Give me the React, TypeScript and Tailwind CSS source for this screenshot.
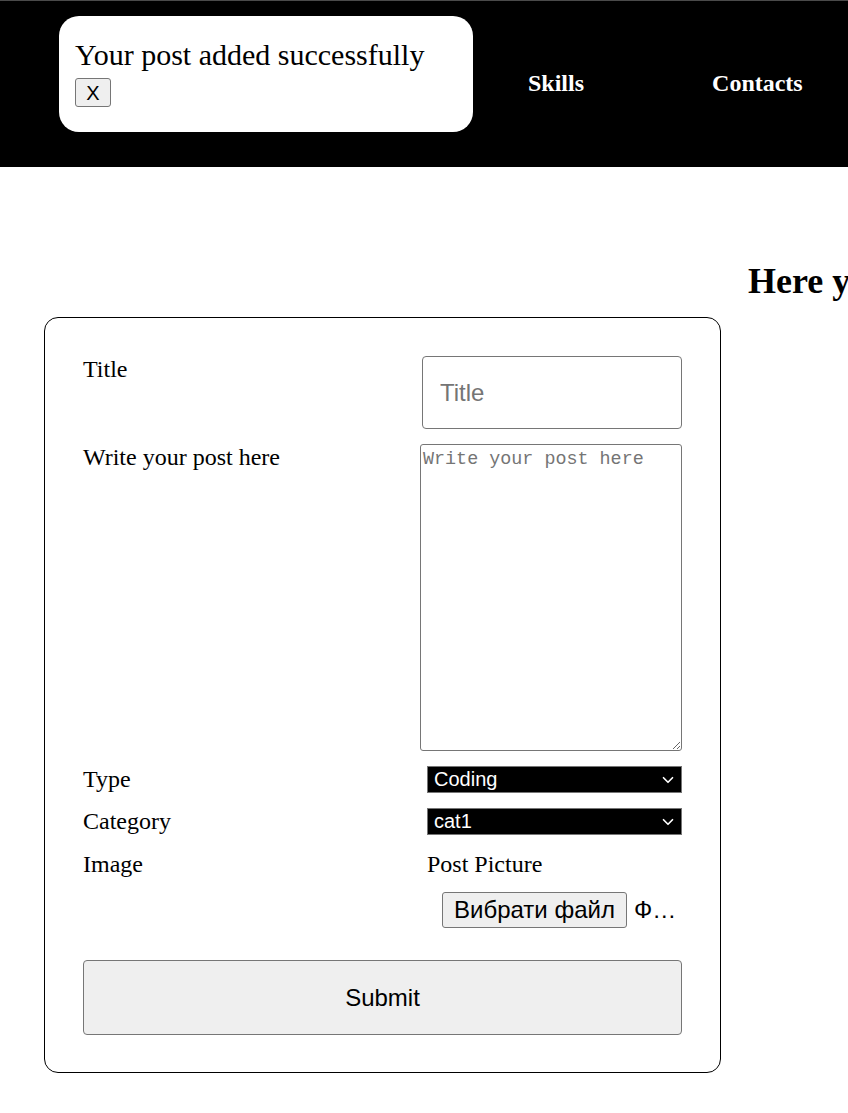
import { ChevronDown } from 'lucide-react';

const serif = { fontFamily: '"Liberation Serif", "Times New Roman", serif' };
const sans = { fontFamily: '"Liberation Sans", Arial, sans-serif' };

const Field = ({ label, children, center = false }: { label: string; children: React.ReactNode; center?: boolean }) => (
  <div className={`flex justify-between ${center ? 'items-center' : 'items-start'}`}>
    <label className="text-[24px] leading-[27px]">{label}</label>
    {children}
  </div>
);

const Select = ({ value }: { value: string }) => (
  <div className="relative w-[255px] h-[27px] bg-black border border-[#767676] text-white">
    <span className="block pl-[6px] text-[20px] leading-[25px]" style={sans}>
      {value}
    </span>
    <ChevronDown className="absolute right-[4px] top-[4px] h-[18px] w-[18px]" strokeWidth={2.25} />
  </div>
);

export default function App() {
  return (
    <div className="min-h-[1113px] bg-white text-black overflow-hidden" style={serif}>
      <header className="h-[167px] bg-black border-t border-[#4a4a4a] flex items-start">
        <div className="ml-[59px] mt-[15px] w-[414px] h-[116px] rounded-[20px] bg-white pl-[16px] pt-[22px]">
          <p className="text-[30px] leading-[34px]">Your post added successfully</p>
          <button
            className="mt-[6px] w-[36px] h-[29px] bg-[#efefef] border border-[#767676] rounded-[3px] text-[20px] leading-none"
            style={sans}
          >
            X
          </button>
        </div>
        <nav className="flex items-center h-full text-white font-bold text-[24px] pb-[2px]">
          <a className="ml-[55px]">Skills</a>
          <a className="ml-[128px]">Contacts</a>
        </nav>
      </header>

      <main className="flex items-start">
        <form className="shrink-0 ml-[44px] mt-[150px] w-[677px] border border-black rounded-[14px] px-[38px] pt-[38px] pb-[37px]">
          <div className="flex flex-col">
            <Field label="Title">
              <input
                placeholder="Title"
                className="w-[260px] h-[73px] border border-[#767676] rounded-[4px] px-[17px] text-[24px] placeholder:text-[#757575]"
                style={sans}
              />
            </Field>
            <div className="mt-[15px]">
              <Field label="Write your post here">
                <textarea
                  placeholder="Write your post here"
                  className="w-[262px] h-[307px] border border-[#767676] rounded-[3px] px-[2px] pt-[4px] text-[18.4px] leading-[22px] placeholder:text-[#757575]"
                  style={{ fontFamily: '"Liberation Mono", "DejaVu Sans Mono", monospace' }}
                />
              </Field>
            </div>
            <div className="mt-[15px]">
              <Field label="Type" center>
                <Select value="Coding" />
              </Field>
            </div>
            <div className="mt-[15px]">
              <Field label="Category" center>
                <Select value="cat1" />
              </Field>
            </div>
            <div className="mt-[16px] flex justify-between items-start">
              <label className="text-[24px] leading-[27px]">Image</label>
              <div className="w-[255px]">
                <div className="text-[24px] leading-[27px]">Post Picture</div>
                <div className="mt-[14px] ml-[15px] flex items-center text-[24px]" style={sans}>
                  <span className="h-[36px] px-[11px] flex items-center bg-[#efefef] border border-[#767676] rounded-[3px]">
                    Вибрати файл
                  </span>
                  <span className="ml-[7px]">Ф…</span>
                </div>
              </div>
            </div>
            <button
              type="button"
              className="mt-[32px] w-full h-[75px] bg-[#efefef] border border-[#767676] rounded-[4px] text-[24px]"
              style={sans}
            >
              Submit
            </button>
          </div>
        </form>
        <h1 className="shrink-0 ml-[27px] mt-[94px] text-[36px] leading-[41px] font-bold whitespace-nowrap">
          Here you can see all posts
        </h1>
      </main>
    </div>
  );
}
